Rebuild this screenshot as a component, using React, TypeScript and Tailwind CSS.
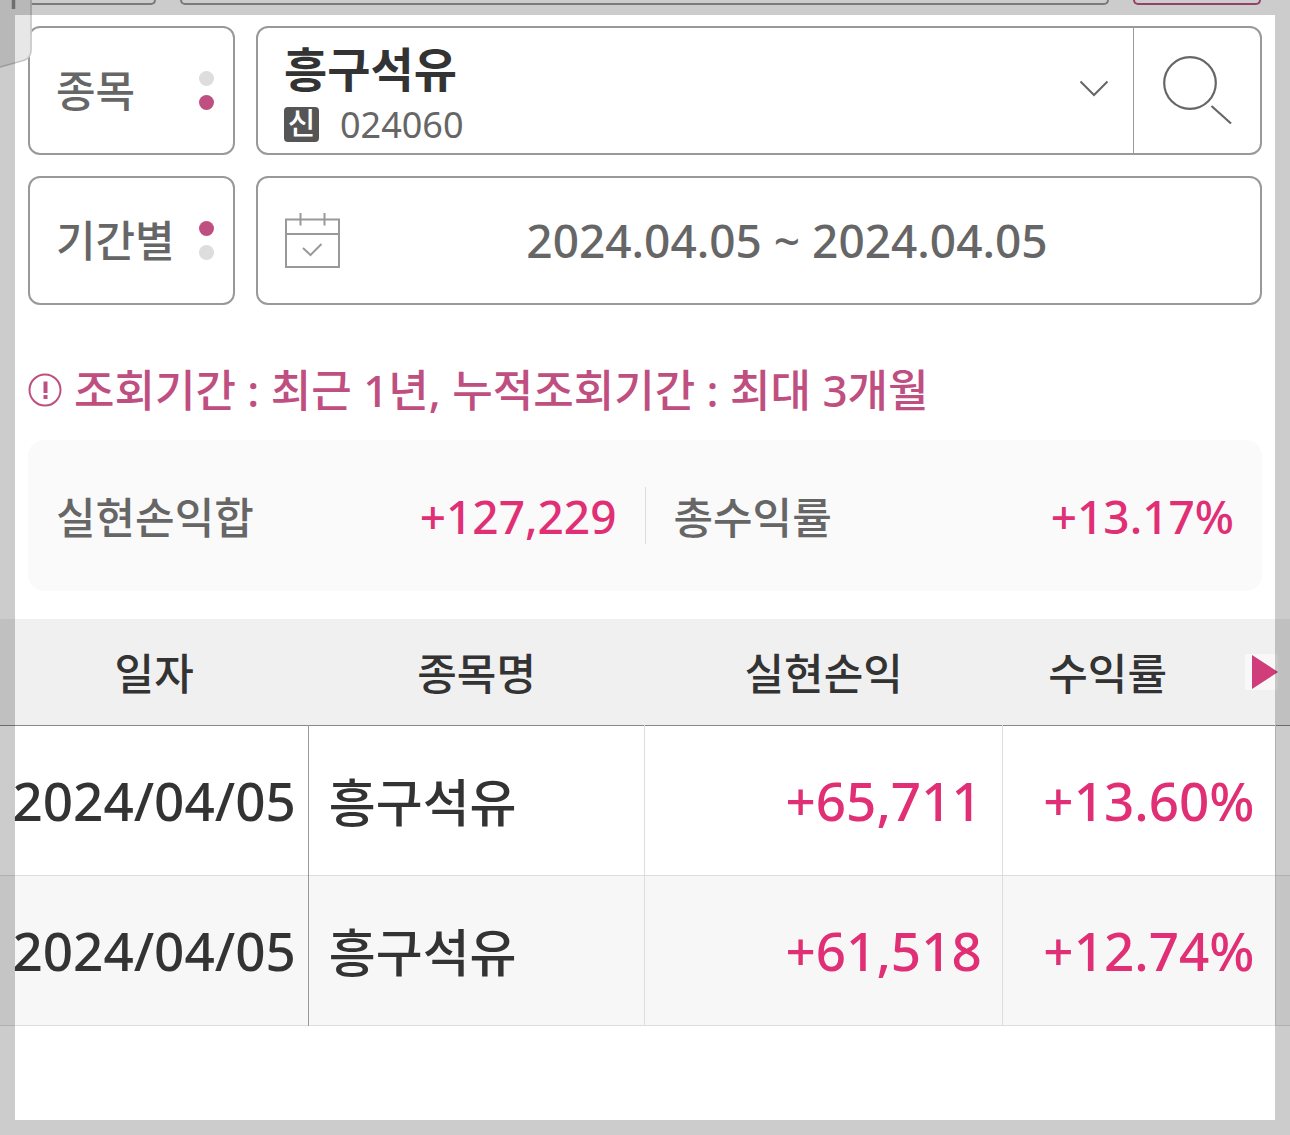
import React from "react";

type Trade = { date: string; name: string; profit: string; rate: string };

const trades: Trade[] = [
  { date: "2024/04/05", name: "흥구석유", profit: "+65,711", rate: "+13.60%" },
  { date: "2024/04/05", name: "흥구석유", profit: "+61,518", rate: "+12.74%" },
];

function ModeButton({ label, active }: { label: string; active: "top" | "bottom" }) {
  return (
    <button
      type="button"
      className="flex h-[129px] w-[207px] shrink-0 items-center justify-between rounded-xl border-2 border-[#999] bg-white pr-[19px] pl-[26px] font-['Noto_Sans_CJK_KR',sans-serif] text-[43px] leading-none font-medium text-[#666]"
    >
      <span className="pb-1">{label}</span>
      <span className="flex flex-col gap-[9px]" aria-hidden="true">
        <span className={active === "top" ? "size-[15px] rounded-full bg-[#bf4f80]" : "size-[15px] rounded-full bg-[#ddd]"} />
        <span className={active === "bottom" ? "size-[15px] rounded-full bg-[#bf4f80]" : "size-[15px] rounded-full bg-[#ddd]"} />
      </span>
    </button>
  );
}

function PreviousRow() {
  return (
    <div className="flex h-[5px] items-end gap-6 pr-[29px] pl-7" aria-hidden="true">
      <div className="h-[5px] w-32 rounded-b-xl border-2 border-t-0 border-[#999]" />
      <div className="h-[5px] flex-1 rounded-b-xl border-2 border-t-0 border-[#999]" />
      <div className="h-[5px] w-32 rounded-b-xl border-2 border-t-0 border-[#bf4f80]" />
    </div>
  );
}

function StockField() {
  return (
    <div className="flex h-[129px] min-w-0 flex-1 rounded-xl border-2 border-[#999]">
      <label className="relative flex min-w-0 flex-1 flex-col justify-center gap-3 pt-1 pl-[26px]">
        <select
          aria-label="종목 선택"
          className="h-[52px] w-full appearance-none bg-transparent text-[47px] leading-[52px] font-bold text-[#333] outline-none"
        >
          <option>흥구석유</option>
        </select>
        <span className="flex items-center gap-[21px] text-4xl leading-9 text-[#666]">
          <span className="flex size-[35px] items-center justify-center rounded bg-[#555] pb-1 text-[30px] leading-[30px] font-medium text-white">
            신
          </span>
          <span>024060</span>
        </span>
        <svg className="pointer-events-none absolute top-[51px] right-6 h-[18px] w-[30px]" viewBox="0 0 30 18" fill="none" stroke="#666" strokeWidth="2" aria-hidden="true">
          <path d="M1.500 2.500 15 16 28.500 2.500" />
        </svg>
      </label>
      <button type="button" aria-label="검색" className="flex w-[127px] items-start border-l border-[#999] pt-[27px] pl-[28px]">
        <svg className="h-[72px] w-[72px]" viewBox="0 0 72 72" fill="none" stroke="#666" strokeWidth="2.200" aria-hidden="true">
          <circle cx="28" cy="28" r="25.800" />
          <path d="M49.500 51 69 68.500" />
        </svg>
      </button>
    </div>
  );
}

function PeriodField() {
  return (
    <button type="button" className="flex h-[129px] min-w-0 flex-1 items-center rounded-xl border-2 border-[#999] px-[26px] text-[#666]">
      <svg className="h-[56px] w-[56px] shrink-0" viewBox="0 0 56 56" fill="none" stroke="#999" strokeWidth="2" aria-hidden="true">
        <path d="M2 6.500H55V54H2ZM2 21H55M16.500 0V12.500M40.500 0V12.500" />
        <path d="M19 35 26.500 42 37.500 31" />
      </svg>
      <span className="flex-1 pb-0.5 text-center text-[46px] leading-none font-medium">2024.04.05 ~ 2024.04.05</span>
    </button>
  );
}

function EdgePanel() {
  return (
    <svg className="pointer-events-none absolute top-0 left-0 h-[70px] w-9" viewBox="0 0 36 70" fill="none" aria-hidden="true">
      <path d="M0 0H31.500V50Q31.500 57 25 60L0 67Z" fill="#e7e7e7" />
      <path d="M31 0V50Q31 57 25 60L0 67" stroke="#c4c4c4" strokeWidth="1.500" />
      <path d="M13.500 0V9" stroke="#8a8a8a" strokeWidth="3.500" />
    </svg>
  );
}

export default function App() {
  return (
    <div className="relative min-h-screen overflow-hidden bg-white font-['Noto_Sans','Noto_Sans_CJK_KR',sans-serif] text-[#333]">
      <PreviousRow />
      <main>
        <section className="mt-[21px] flex flex-col gap-[21px] px-7">
          <div className="flex gap-[21px]">
            <ModeButton label="종목" active="bottom" />
            <StockField />
          </div>
          <div className="flex gap-[21px]">
            <ModeButton label="기간별" active="top" />
            <PeriodField />
          </div>
        </section>

        <p className="mt-[59px] flex items-center gap-3 px-7 text-[44px] leading-[52px] font-medium text-[#bf4f80]">
          <svg className="h-[34px] w-[34px] shrink-0" viewBox="0 0 34 34" fill="none" stroke="currentColor" aria-hidden="true">
            <circle cx="17" cy="17" r="15.500" strokeWidth="2" />
            <path d="M17.500 8.500V20M17.500 22V26" strokeWidth="4" />
          </svg>
          조회기간 : 최근 1년, 누적조회기간 : 최대 3개월
        </p>

        <dl className="mx-7 mt-6 flex h-[151px] items-center rounded-2xl bg-[#fafafa] text-[43px] leading-none font-medium">
          <div className="flex h-[57px] flex-1 items-center justify-between border-r border-[#ddd] px-7">
            <dt className="font-['Noto_Sans_CJK_KR',sans-serif] text-[#666]">실현손익합</dt>
            <dd className="text-[46px] text-[#e02f74]">+127,229</dd>
          </div>
          <div className="flex flex-1 items-center justify-between px-7">
            <dt className="font-['Noto_Sans_CJK_KR',sans-serif] text-[#666]">총수익률</dt>
            <dd className="text-[46px] text-[#e02f74]">+13.17%</dd>
          </div>
        </dl>

        <table className="mt-7 w-full table-fixed border-collapse">
          <colgroup>
            <col className="w-[23.9%]" />
            <col className="w-[26.1%]" />
            <col className="w-[27.7%]" />
            <col />
            <col className="w-[15px]" />
          </colgroup>
          <thead className="font-['Noto_Sans_CJK_KR',sans-serif]">
            <tr className="h-[106px] border-b border-[#888] bg-[#f0f0f0] text-[43px] leading-none">
              <th className="font-medium">일자</th>
              <th className="font-medium">종목명</th>
              <th className="font-medium">실현손익</th>
              <th colSpan={2} className="font-medium">
                <div className="flex items-center">
                  <span className="flex-1 pr-8 text-center">수익률</span>
                  <button type="button" aria-label="다음 항목" className="mr-3 flex h-9 w-[33px] items-center justify-end bg-[#f8f8f8]">
                    <svg className="h-[34px] w-[26px]" viewBox="0 0 26 34" aria-hidden="true">
                      <path d="M0 0 26 17 0 34Z" fill="#d13d7b" />
                    </svg>
                  </button>
                </div>
              </th>
            </tr>
          </thead>
          <tbody>
            {trades.map((trade, i) => (
              <tr key={i} className="h-[150px] border-b border-[#ddd] text-[53px] leading-none font-medium even:bg-[#f7f7f7]">
                <td className="border-r border-[#999] pr-3 text-right whitespace-nowrap">{trade.date}</td>
                <td className="border-r border-[#ddd] pl-5 font-['Noto_Sans_CJK_KR',sans-serif] text-[51px]">{trade.name}</td>
                <td className="border-r border-[#ddd] pr-5 text-right text-[#e02f74]">{trade.profit}</td>
                <td className="border-r border-[#ddd] pr-5 text-right text-[#e02f74]">{trade.rate}</td>
                <td />
              </tr>
            ))}
          </tbody>
        </table>
      </main>
      <EdgePanel />
      <div className="pointer-events-none absolute inset-0 border-[15px] border-black/20" aria-hidden="true" />
    </div>
  );
}
